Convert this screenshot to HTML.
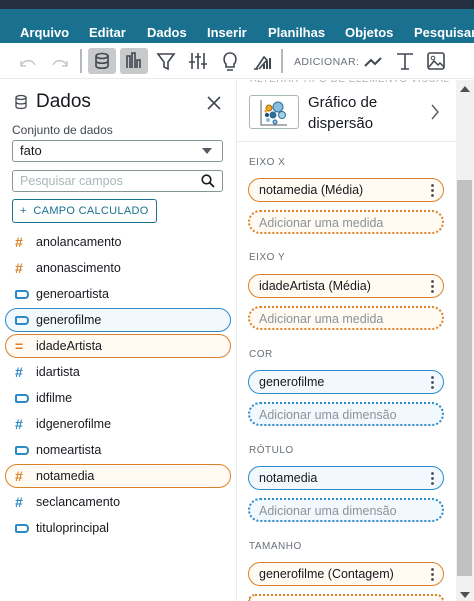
<!DOCTYPE html>
<html style="overflow:hidden;height:601px"><head><meta charset="utf-8"><style>
*{box-sizing:border-box;margin:0;padding:0}
body{width:474px;height:601px;overflow:hidden;background:#fff;font-family:"Liberation Sans",sans-serif;color:#16191f;position:relative;font-size:13px}
.a{position:absolute}
.nav span{position:absolute;top:16px;color:#fff;font-size:13px;font-weight:bold}
.lbl{position:absolute;font-size:10px;color:#687078;letter-spacing:.5px}
.f{position:absolute;left:5px;width:226px;height:24px;font-size:12.5px;line-height:22px;padding-left:30px;border-radius:12px;border:1px solid transparent}
.f i{position:absolute;left:9px;top:0;font-style:normal;font-weight:bold;font-size:14px}
.o{color:#d9822b}.b{color:#2d8ac6}
.tag{position:absolute;left:9px;top:7px;width:14px;height:9px;border:2px solid #2d8ac6;border-radius:2px 4px 4px 2px}
.p{position:absolute;left:248px;width:196px;height:24px;border-radius:12px;font-size:12.5px;line-height:22px;padding-left:10px}
.po{border:1px solid #d9822b;background:#fffaf2}
.pb{border:1px solid #2d8ac6;background:#f1f9ff}
.ado{border:2px dotted #d9822b;background:#fffaf2;color:#8d9399}
.adb{border:2px dotted #2d8ac6;background:#f1f9ff;color:#8d9399}
.dots{position:absolute;right:9px;top:4px;width:3px;height:14px;background:radial-gradient(circle,#545b64 1.3px,transparent 1.6px) 0 0/3px 5px repeat-y}
</style></head><body>
<div class="a" style="left:0;top:0;width:474px;height:9px;background:#232f3e"></div>
<div class="a nav" style="left:0;top:9px;width:474px;height:34px;background:#19708f">
<span style="left:20px">Arquivo</span><span style="left:89px">Editar</span><span style="left:147px">Dados</span><span style="left:207px">Inserir</span><span style="left:268px">Planilhas</span><span style="left:345px">Objetos</span><span style="left:414px">Pesquisar</span></div>
<div class="a" style="left:0;top:43px;width:474px;height:36px;border-bottom:1px solid #e9ebed"></div>
<svg class="a" style="left:0;top:43px" width="474" height="36">
<g fill="none" stroke="#c5c9cc" stroke-width="1.5"><path d="M21 23c3-7 11-7 14-1M21 18v5h5"/><path d="M67 23c-3-7-11-7-14-1M67 18v5h-5"/></g>
<line x1="81" y1="6" x2="81" y2="30" stroke="#687078"/>
<rect x="88" y="5" width="28" height="26" rx="3" fill="#c7c9cb"/><rect x="120" y="5" width="28" height="26" rx="3" fill="#c7c9cb"/>
<g fill="none" stroke="#414750" stroke-width="1.6">
<ellipse cx="102" cy="13" rx="6" ry="2.5"/><path d="M96 13v10c0 3 12 3 12 0V13M96 18c0 3 12 3 12 0"/>
<path d="M127 25V13h3v12M132 25V10h3v15M137 25v-8h3v8"/>
<path d="M158 11h16l-6 8v7l-4-2v-5z"/>
<path d="M192 10v16M198 10v16M204 10v16M189 19h6M195 14h6M201 21h6"/>
<path d="M226 21c-3-2-3-11 4-11s7 9 4 11v3h-8z M227 27h6"/>
<path d="M256 26l8-12 3 3-8 9M254 26h4"/>
</g>
<path d="M263 26v-5h2v5zM266 26v-8h2v8zM269 26v-11h2v11z" fill="#414750"/>
<line x1="282" y1="6" x2="282" y2="30" stroke="#687078"/>
<text x="294" y="22" font-size="10.5" fill="#687078" font-family="Liberation Sans" letter-spacing=".4">ADICIONAR:</text>
<path d="M365 23l6-6 4 4 6-6" fill="none" stroke="#414750" stroke-width="2"/>
<path d="M397 11h16M405 11v15M401 26h8" fill="none" stroke="#414750" stroke-width="1.6"/>
<rect x="428" y="10" width="16" height="16" rx="2" fill="none" stroke="#414750" stroke-width="1.6"/>
<path d="M429 24l5-6 4 4 2-2 4 4" fill="none" stroke="#414750" stroke-width="1.5"/><circle cx="433" cy="15" r="1.8" fill="none" stroke="#414750"/>
</svg>
<!-- left panel -->
<div class="a" style="left:236px;top:80px;width:1px;height:521px;background:#e9ebed"></div>
<svg class="a" style="left:14px;top:94px" width="16" height="16"><g fill="none" stroke="#414750" stroke-width="1.3"><ellipse cx="7" cy="3.5" rx="5" ry="2"/><path d="M2 3.5v9c0 2.6 10 2.6 10 0v-9M2 8c0 2.6 10 2.6 10 0"/></g></svg>
<div class="a" style="left:36px;top:91px;font-size:19px">Dados</div>
<svg class="a" style="left:207px;top:96px" width="14" height="14"><path d="M1 1l12 12M13 1L1 13" stroke="#414750" stroke-width="1.6"/></svg>
<div class="a" style="left:12px;top:123px;font-size:12px;color:#414750">Conjunto de dados</div>
<div class="a" style="left:12px;top:140px;width:211px;height:22px;border:1px solid #879596;border-radius:3px;padding-left:7px;line-height:20px;font-size:13px">fato</div>
<svg class="a" style="left:202px;top:148px" width="10" height="6"><path d="M0 0h10L5 6z" fill="#545b64"/></svg>
<div class="a" style="left:12px;top:170px;width:211px;height:22px;border:1px solid #879596;border-radius:3px;padding-left:7px;line-height:20px;font-size:12.5px;color:#aab7b8">Pesquisar campos</div>
<svg class="a" style="left:201px;top:174px" width="14" height="14"><circle cx="5.5" cy="5.5" r="4.3" fill="none" stroke="#16191f" stroke-width="1.6"/><path d="M8.5 8.5l4.5 4.5" stroke="#16191f" stroke-width="1.8"/></svg>
<div class="a" style="left:12px;top:199px;width:145px;height:24px;border:1px solid #19708f;border-radius:3px;color:#19708f;font-size:11px;line-height:22px;padding-left:7px;white-space:nowrap;letter-spacing:.3px">+&nbsp;&nbsp;CAMPO CALCULADO</div>

<div class="f" style="top:230px"><i class="o">#</i>anolancamento</div>
<div class="f" style="top:256px"><i class="o">#</i>anonascimento</div>
<div class="f" style="top:282px"><span class="tag"></span>generoartista</div>
<div class="f" style="top:308px;border-color:#2d8ac6;background:#f1f9ff"><span class="tag"></span>generofilme</div>
<div class="f" style="top:334px;border-color:#d9822b;background:#fffaf2"><i class="o">=</i>idadeArtista</div>
<div class="f" style="top:360px"><i class="b">#</i>idartista</div>
<div class="f" style="top:386px"><span class="tag"></span>idfilme</div>
<div class="f" style="top:412px"><i class="b">#</i>idgenerofilme</div>
<div class="f" style="top:438px"><span class="tag"></span>nomeartista</div>
<div class="f" style="top:464px;border-color:#d9822b;background:#fffaf2"><i class="o">#</i>notamedia</div>
<div class="f" style="top:490px"><i class="b">#</i>seclancamento</div>
<div class="f" style="top:516px"><span class="tag"></span>tituloprincipal</div>

<!-- right panel -->
<div class="a" style="left:250px;top:80px;width:200px;height:4px;overflow:hidden"><div style="position:absolute;top:-6px;left:0;font-size:10px;color:#aab7b8;letter-spacing:.5px;white-space:nowrap">ALTERAR TIPO DE ELEMENTO VISUAL</div></div>
<div class="a" style="left:249px;top:95px;width:50px;height:34px;border:1px solid #aab7b8;border-radius:3px"></div>
<svg class="a" style="left:258px;top:98px" width="32" height="30"><path d="M3 2v25h26" stroke="#545b64" fill="none"/><circle cx="20" cy="9" r="5" fill="#88bde0" stroke="#2d6e96"/><circle cx="11" cy="10" r="3" fill="#f0a830" stroke="#a36b10"/><circle cx="15" cy="17" r="3.5" fill="#2d6e96"/><circle cx="24" cy="17" r="3.5" fill="#a6cfea" stroke="#2d6e96"/><circle cx="9" cy="17" r="2" fill="#1d4e6e"/><circle cx="10" cy="22" r="2" fill="#88bde0"/><circle cx="17" cy="24" r="2" fill="#88bde0" stroke="#2d6e96"/><circle cx="8" cy="13" r="1.6" fill="#f0a830"/></svg>
<div class="a" style="left:308px;top:92px;font-size:15px;line-height:21px">Gráfico de<br>dispersão</div>
<svg class="a" style="left:430px;top:104px" width="10" height="16"><path d="M2 1l6 7-6 7" fill="none" stroke="#545b64" stroke-width="1.4"/></svg>
<div class="a" style="left:237px;top:141px;width:219px;height:1px;background:#e9ebed"></div>

<div class="lbl" style="left:249px;top:157px">EIXO X</div>
<div class="p po" style="top:178px">notamedia (Média)<span class="dots"></span></div>
<div class="p ado" style="top:210px;padding-left:9px">Adicionar uma medida</div>
<div class="lbl" style="left:249px;top:252px">EIXO Y</div>
<div class="p po" style="top:274px">idadeArtista (Média)<span class="dots"></span></div>
<div class="p ado" style="top:306px;padding-left:9px">Adicionar uma medida</div>
<div class="lbl" style="left:249px;top:349px">COR</div>
<div class="p pb" style="top:370px">generofilme<span class="dots"></span></div>
<div class="p adb" style="top:402px;padding-left:9px">Adicionar uma dimensão</div>
<div class="lbl" style="left:249px;top:445px">RÓTULO</div>
<div class="p pb" style="top:466px">notamedia<span class="dots"></span></div>
<div class="p adb" style="top:498px;padding-left:9px">Adicionar uma dimensão</div>
<div class="lbl" style="left:249px;top:541px">TAMANHO</div>
<div class="p po" style="top:562px">generofilme (Contagem)<span class="dots"></span></div>
<div class="p ado" style="top:594px;height:7px;border-bottom:none;border-radius:12px 12px 0 0"></div>

<!-- scrollbar -->
<div class="a" style="left:456px;top:80px;width:18px;height:521px;background:#f1f1f1"></div>
<div class="a" style="left:457px;top:180px;width:15px;height:396px;background:#c1c1c1"></div>
<svg class="a" style="left:460px;top:86px" width="10" height="6"><path d="M0 6h10L5 0z" fill="#505050"/></svg>
<svg class="a" style="left:460px;top:592px" width="10" height="6"><path d="M0 0h10L5 6z" fill="#505050"/></svg>
</body></html>
